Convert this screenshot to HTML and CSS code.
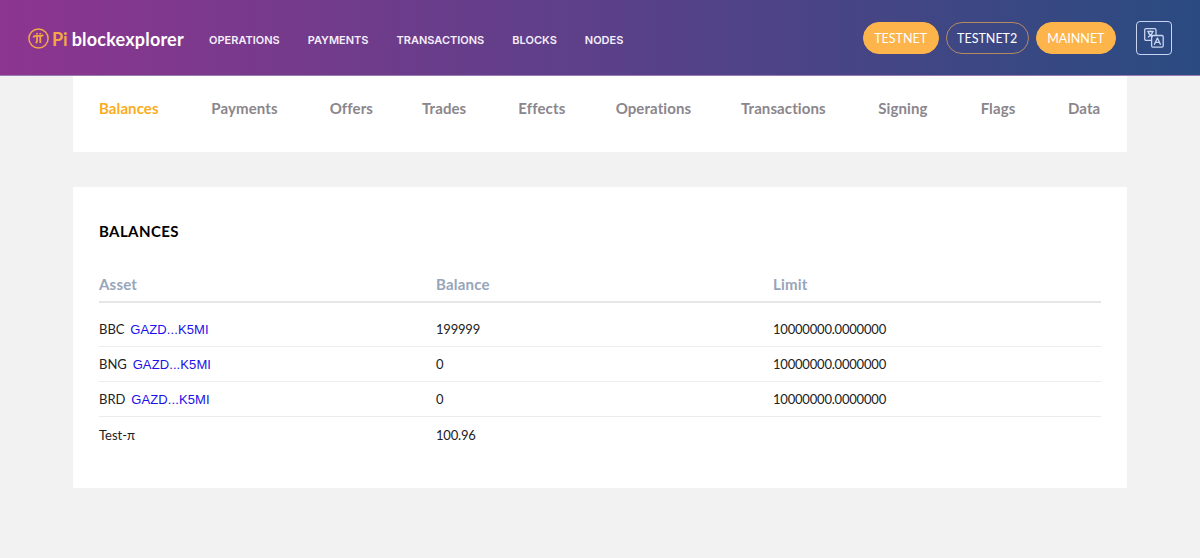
FILE: index.html
```
<!DOCTYPE html>
<html lang="en">
<head>
    <meta charset="UTF-8">
    <meta name="viewport" content="width=device-width, initial-scale=1.0">
    <title>Pi blockexplorer</title>
    <link rel="stylesheet" href="styles.css">
</head>
<body>
    <header class="header">
        <a class="logo" href="#">
            <svg class="logo-icon" width="21" height="21" viewBox="0 0 21 21" fill="none" stroke="#f3a845">
                <circle cx="10.5" cy="10.5" r="9.6" stroke-width="1.5"/>
                <path d="M5.4 9.6c.3-1.2 1-1.7 2.100-1.700h5.500c1 0 1.700-.3 2.200-1.100M9 8v4.800c0 1-.4 1.700-1.200 2.200M12.300 8v7M9 5v1.600M12.300 5v1.600" stroke-width="1.800"/>
            </svg>
            <span class="logo-pi">Pi</span>
            <span class="logo-name">blockexplorer</span>
        </a>
        <nav class="nav">
            <a href="#">OPERATIONS</a>
            <a href="#">PAYMENTS</a>
            <a href="#">TRANSACTIONS</a>
            <a href="#">BLOCKS</a>
            <a href="#">NODES</a>
        </nav>
        <div class="networks">
            <a class="network" href="#">TESTNET</a>
            <a class="network active" href="#">TESTNET2</a>
            <a class="network" href="#">MAINNET</a>
        </div>
        <button class="language" aria-label="Language">
            <svg width="20" height="20" viewBox="0 0 20 20" fill="none" stroke="#c9d4f0" stroke-width="1.3" stroke-linecap="round" stroke-linejoin="round">
                <path d="M7.5 12.4H2a1.3 1.3 0 0 1-1.3-1.3V2A1.3 1.3 0 0 1 2 .7h8.7A1.3 1.3 0 0 1 12 2v5"/>
                <path d="M3.7 3.5h5.5M6.4 2.8v.7M4.4 4.2c.5 2.3 2 3.7 4 4.500M8.500 4.200c-.5 2.300-2 3.700-4.200 4.800"/>
                <rect x="7.6" y="7.5" width="11.6" height="11.6" rx="1.3"/>
                <path d="M10.4 16.4l3-6.4 3 6.4M11.4 14.400h4"/>
            </svg>
        </button>
    </header>

    <main class="container">
        <div class="tabs">
            <a class="active" href="#">Balances</a>
            <a href="#">Payments</a>
            <a href="#">Offers</a>
            <a href="#">Trades</a>
            <a href="#">Effects</a>
            <a href="#">Operations</a>
            <a href="#">Transactions</a>
            <a href="#">Signing</a>
            <a href="#">Flags</a>
            <a href="#">Data</a>
        </div>

        <section class="card">
            <h2>BALANCES</h2>
            <table class="balances">
                <thead>
                    <tr><th>Asset</th><th>Balance</th><th class="limit">Limit</th></tr>
                </thead>
                <tbody>
                    <tr><td>BBC <a href="#">GAZD...K5MI</a></td><td class="amount">199999</td><td class="amount">10000000.0000000</td></tr>
                    <tr><td>BNG <a href="#">GAZD...K5MI</a></td><td class="amount">0</td><td class="amount">10000000.0000000</td></tr>
                    <tr><td>BRD <a href="#">GAZD...K5MI</a></td><td class="amount">0</td><td class="amount">10000000.0000000</td></tr>
                    <tr><td>Test-π</td><td class="amount">100.96</td><td></td></tr>
                </tbody>
            </table>
        </section>
    </main>
</body>
</html>
```
FILE: styles.css
```
* {
    box-sizing: border-box;
}
body {
    font-family: Lato, "Open Sans", sans-serif;
    background-color: #f2f2f2;
    color: #222;
    margin: 0;
}
a {
    text-decoration: none;
}
.header {
    display: flex;
    align-items: center;
    height: 76px;
    padding: 0 28px;
    background: linear-gradient(90deg, #8d3590, #2a4b81);
    border-bottom: 1px solid #9a7cb4;
}
.logo {
    display: flex;
    align-items: center;
    width: 181px;
    padding-top: 2px;
    font-size: 18px;
    font-weight: 700;
    line-height: 24px;
    white-space: nowrap;
}
.logo-pi {
    margin-left: 3px;
    color: #f3a845;
}
.logo-name {
    margin-left: 4px;
    color: #fff;
    letter-spacing: 0.2px;
}
.nav {
    display: flex;
    gap: 28px;
    padding-top: 4px;
}
.nav a {
    color: #f5eefa;
    font-family: Inter, sans-serif;
    font-size: 11px;
    font-weight: 600;
    line-height: 16px;
}
.networks {
    display: flex;
    gap: 7px;
    margin-left: auto;
}
.network {
    height: 32px;
    padding: 0 10.5px;
    border: 1px solid #fdb44b;
    border-radius: 16px;
    background-color: #fdb44b;
    color: #fff;
    font-size: 12.5px;
    line-height: 31px;
}
.network.active {
    background-color: transparent;
    border-color: #b58a63;
}
.language {
    display: flex;
    align-items: center;
    justify-content: center;
    width: 36px;
    height: 34px;
    margin-left: 20px;
    padding: 0;
    border: 1px solid #c9d4f0;
    border-radius: 4px;
    background: none;
}
.container {
    width: 1054px;
    margin: 0 auto;
}
.tabs {
    display: grid;
    grid-template-columns: 61px 67px 41px 45px 46px 74px 86px 51px 36px 33px;
    justify-content: space-between;
    height: 76px;
    padding: 22px 26px 0;
    background-color: #fff;
}
.tabs a {
    color: #8b868c;
    font-size: 15px;
    font-weight: 700;
    letter-spacing: 0.1px;
    line-height: 20px;
}
.tabs a.active {
    color: #fcac20;
}
.card {
    height: 301px;
    margin-top: 35px;
    padding: 34px 26px 0;
    background-color: #fff;
}
.card h2 {
    margin: 0;
    color: #000;
    font-size: 15px;
    letter-spacing: 0.4px;
    line-height: 20px;
}
.balances {
    width: 100%;
    margin-top: 33px;
    border-collapse: separate;
    border-spacing: 0;
    table-layout: fixed;
    text-align: left;
}
.balances th {
    height: 29px;
    padding: 0;
    border-bottom: 2px solid #e6e6e8;
    color: #96a5b9;
    font-size: 15px;
    letter-spacing: 0.2px;
    line-height: 20px;
    vertical-align: top;
}
.balances th.limit {
    width: 328px;
}
.balances td {
    height: 35px;
    padding: 0;
    border-bottom: 1px solid #ececec;
    font-size: 13px;
    line-height: 18px;
}
.balances td.amount {
    letter-spacing: -0.2px;
}
.balances tr:first-child td {
    height: 44px;
    padding-top: 9px;
}
.balances tr:last-child td {
    border-bottom: none;
}
.balances td a {
    margin-left: 2.5px;
    color: #1a10e8;
    font-family: "Liberation Sans", Arial, sans-serif;
    letter-spacing: 0.1px;
}
```
